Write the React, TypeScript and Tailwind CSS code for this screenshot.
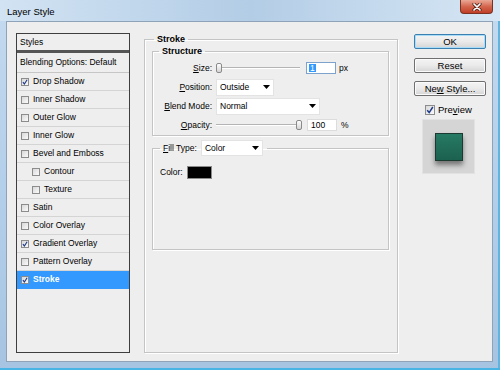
import React from 'react';

type StyleItem = { name: string; on?: boolean; sub?: boolean; active?: boolean };

const styleItems: StyleItem[] = [
  { name: 'Drop Shadow', on: true },
  { name: 'Inner Shadow' },
  { name: 'Outer Glow' },
  { name: 'Inner Glow' },
  { name: 'Bevel and Emboss' },
  { name: 'Contour', sub: true },
  { name: 'Texture', sub: true },
  { name: 'Satin' },
  { name: 'Color Overlay' },
  { name: 'Gradient Overlay', on: true },
  { name: 'Pattern Overlay' },
  { name: 'Stroke', on: true, active: true },
];

function Check({ on, big }: { on?: boolean; big?: boolean }) {
  return (
    <span
      className={`inline-flex shrink-0 items-center justify-center border border-[#8c8c8c] bg-gradient-to-br from-[#d9d9d9] to-[#fafafa] ${
        big ? 'h-[10px] w-[10px]' : 'h-[8px] w-[8px]'
      }`}
    >
      {on && (
        <svg viewBox="0 0 8 8" className={big ? 'h-[8px] w-[8px]' : 'h-[6px] w-[6px]'}>
          <path d="M1.2 4.2 L3.2 6.6 L6.8 1" fill="none" stroke="#1f3a8a" strokeWidth="1.5" />
        </svg>
      )}
    </span>
  );
}

function Arrow() {
  return (
    <svg viewBox="0 0 7 4" className="h-[4px] w-[7px]">
      <path d="M0 0 H7 L3.5 4 Z" fill="#000" />
    </svg>
  );
}

function Select({ value, w, h }: { value: string; w: string; h: string }) {
  return (
    <div className={`flex items-center justify-between border border-[#e3e3e3] bg-white pl-[3px] pr-[3px] ${w} ${h}`}>
      <span>{value}</span>
      <Arrow />
    </div>
  );
}

function Slider({ atEnd }: { atEnd?: boolean }) {
  return (
    <div className="relative h-[18px] w-[86px]">
      <div className="absolute left-0 right-[2px] top-[8px] h-[2px] border-t border-b border-t-[#b4b4b4] border-b-white" />
      <div
        className={`absolute top-[4px] h-[10px] w-[6px] rounded-[2px] border border-[#8a8a8a] bg-gradient-to-b from-white to-[#d4d4d4] ${
          atEnd ? 'right-0' : 'left-0'
        }`}
      />
    </div>
  );
}

function Btn({ children, primary }: { children: React.ReactNode; primary?: boolean }) {
  return (
    <button
      className={`flex h-[15px] w-[72px] items-center justify-center rounded-[2px] border bg-gradient-to-b from-[#f4f4f4] via-[#eaeaea] to-[#d5d5d5] text-[9.5px] leading-none text-black ${
        primary
          ? 'border-[#3c7fb1] shadow-[inset_0_0_0_1px_#a8dcf7]'
          : 'border-[#707070] shadow-[inset_0_0_0_1px_#fbfbfb]'
      }`}
    >
      {children}
    </button>
  );
}

export default function App() {
  return (
    <div className="flex h-[370px] w-[500px] flex-col overflow-hidden bg-gradient-to-b from-[#c4daef] via-[#b4cfea] to-[#a6c4e2] font-['Liberation_Sans',Arial,sans-serif] text-black shadow-[inset_0_-2px_0_#48b4e4,inset_-2px_0_0_#5fb4e0]">
      {/* title bar */}
      <div className="flex h-[21px] shrink-0 items-start bg-gradient-to-r from-[#d2e3f3] via-[#b3cde6] to-[#d6e6f4]">
        <span className="ml-[7px] mt-[6px] text-[9.5px] leading-[12px] text-black">Layer Style</span>
        <div className="ml-auto mr-[7px] flex h-[14px] w-[33px] items-center justify-center rounded-b-[4px] border border-t-0 border-[#7a3222] bg-gradient-to-b from-[#e9a896] via-[#d4664e] to-[#c13d24]">
          <svg viewBox="0 0 10 8" className="h-[8px] w-[10px]">
            <path d="M2 1 L8 7 M8 1 L2 7" stroke="#5a2418" strokeWidth="3.2" strokeLinecap="round" />
            <path d="M2 1 L8 7 M8 1 L2 7" stroke="#ffffff" strokeWidth="1.7" strokeLinecap="round" />
          </svg>
        </div>
      </div>

      {/* client area */}
      <div className="mb-[8px] ml-[6px] mr-[7px] flex flex-1 border border-[#8ea3b8] bg-[#eeeeee] pl-[9px] pr-[8px] pt-[11px] pb-[8px] text-[8.5px] leading-none">
        {/* styles list */}
        <div className="flex h-[320px] w-[114px] shrink-0 flex-col border border-[#3e3e3e]">
          <div className="flex h-[19px] items-center border-b-[3px] border-[#555555] pl-[3px] pt-[1px]">Styles</div>
          <div className="flex h-[20px] items-center border-b border-[#c6c6c6] pl-[3px]">Blending Options: Default</div>
          {styleItems.map((s) => (
            <div
              key={s.name}
              className={`flex h-[18px] items-center gap-[4px] border-b ${
                s.active ? 'border-[#3399ff] bg-[#3399ff] font-bold text-white' : 'border-[#d4d4d4]'
              } ${s.sub ? 'pl-[15px]' : 'pl-[4px]'}`}
            >
              <Check on={s.on} />
              <span>{s.name}</span>
            </div>
          ))}
        </div>

        {/* stroke group */}
        <fieldset className="ml-[14px] h-[320px] w-[254px] shrink-0 border border-[#c4c4c4] pl-[7px] pr-[8px] shadow-[inset_1px_1px_0_#ffffff,1px_1px_0_#ffffff]">
          <legend className="ml-[2px] px-[3px] text-[9px] font-bold leading-[12px]">Stroke</legend>

          <fieldset className="border border-[#c4c4c4] pb-[1px] pl-[4px] pt-[2px] shadow-[inset_1px_1px_0_#ffffff,1px_1px_0_#ffffff]">
            <legend className="ml-[2px] px-[3px] text-[9px] font-bold leading-[12px]">Structure</legend>
            <div className="flex flex-col gap-[1px]">
              <div className="flex h-[18px] items-center">
                <span className="w-[55px] text-right">
                  <u>S</u>ize:
                </span>
                <div className="ml-[4px]">
                  <Slider />
                </div>
                <div className="ml-[4px] flex h-[12px] w-[30px] items-center border border-[#7da2ce] bg-white pl-[2px]">
                  <span className="bg-[#3399ff] px-[1px] text-white">1</span>
                </div>
                <span className="ml-[3px]">px</span>
              </div>
              <div className="flex h-[18px] items-center">
                <span className="w-[55px] text-right">
                  <u>P</u>osition:
                </span>
                <div className="ml-[4px]">
                  <Select value="Outside" w="w-[58px]" h="h-[17px]" />
                </div>
              </div>
              <div className="flex h-[18px] items-center">
                <span className="w-[55px] text-right">
                  <u>B</u>lend Mode:
                </span>
                <div className="ml-[4px]">
                  <Select value="Normal" w="w-[104px]" h="h-[17px]" />
                </div>
              </div>
              <div className="flex h-[18px] items-center">
                <span className="w-[55px] text-right">
                  <u>O</u>pacity:
                </span>
                <div className="ml-[4px]">
                  <Slider atEnd />
                </div>
                <div className="ml-[5px] flex h-[12px] w-[30px] items-center border border-[#dcdcdc] bg-white pl-[3px]">100</div>
                <span className="ml-[4px]">%</span>
              </div>
            </div>
          </fieldset>

          <fieldset className="mt-[4px] h-[110px] border border-[#c4c4c4] pl-[7px] shadow-[inset_1px_1px_0_#ffffff,1px_1px_0_#ffffff]">
            <legend className="flex h-[16px] items-center pl-[3px] pr-[4px]">
              <span>
                <u>F</u>ill Type:
              </span>
              <div className="ml-[4px]">
                <Select value="Color" w="w-[62px]" h="h-[16px]" />
              </div>
            </legend>
            <div className="mt-[10px] flex h-[13px] items-center">
              <span>Color:</span>
              <div className="ml-[4px] h-[13px] w-[25px] border border-[#8a8a8a] bg-black" />
            </div>
          </fieldset>
        </fieldset>

        {/* buttons */}
        <div className="ml-[16px] flex w-[72px] shrink-0 flex-col pt-[1px]">
          <Btn primary>OK</Btn>
          <div className="mt-[9px]">
            <Btn>Reset</Btn>
          </div>
          <div className="mt-[8px]">
            <Btn>
              Ne<u>w</u>&nbsp;Style...
            </Btn>
          </div>
          <div className="mt-[8px] flex h-[12px] items-center pl-[11px]">
            <Check on big />
            <span className="ml-[3px] text-[9.5px]">
              Pre<u>v</u>iew
            </span>
          </div>
          <div className="ml-[8px] mt-[3px] flex h-[55px] w-[53px] items-start border border-[#e2e2e2] bg-[#d5d5d5] pl-[12px] pt-[13px]">
            <div className="h-[28px] w-[28px] border border-[#1b3a31] bg-gradient-to-b from-[#267a64] to-[#1c6150] shadow-[0_4px_5px_rgba(0,0,0,0.45)]" />
          </div>
        </div>
      </div>
    </div>
  );
}
